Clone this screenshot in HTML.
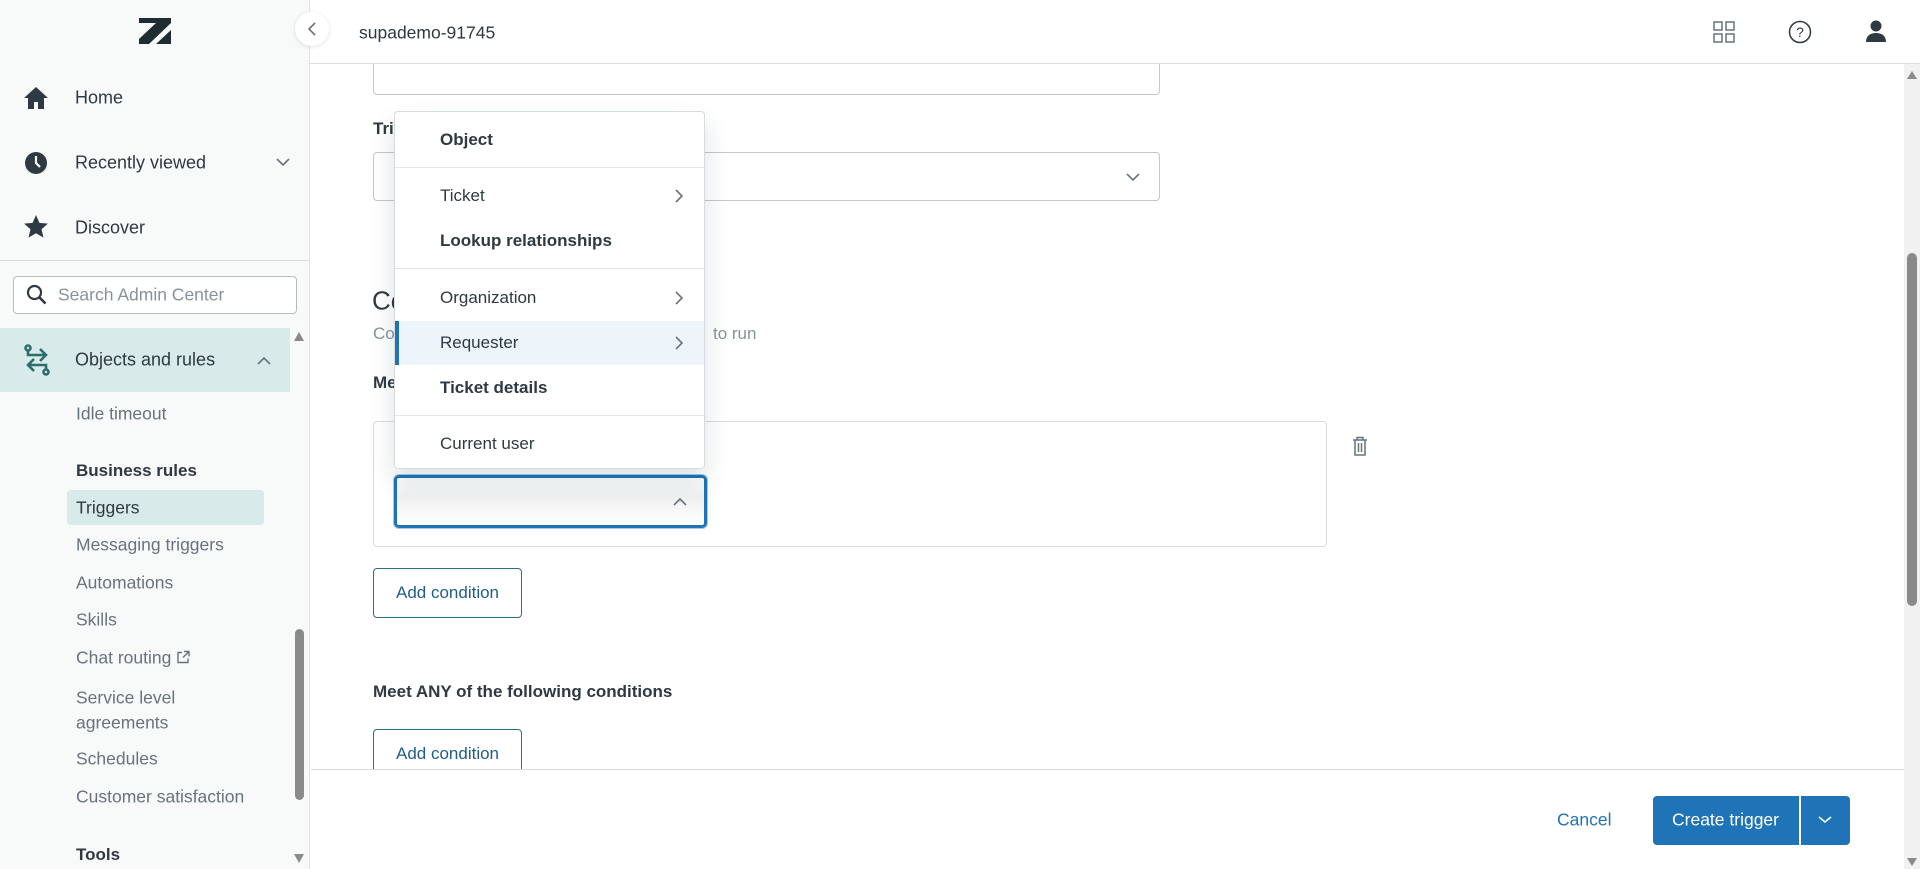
<!DOCTYPE html>
<html><head><meta charset="utf-8"><style>
*{margin:0;padding:0;box-sizing:border-box}
body{width:1920px;height:869px;overflow:hidden;background:#fff;font-family:"Liberation Sans",sans-serif;color:#2f3941;position:relative}
.a{position:absolute;white-space:nowrap}
.t{transform:translateY(-50%)}
#side{position:absolute;left:0;top:0;width:310px;height:869px;background:#f8f9f9;border-right:1px solid #e0e3e5}
.nav{font-size:18px;color:#2f3941}
.sub{font-size:17.5px;color:#68737d}
.mi{font-size:17px;color:#2f3941}
.b{font-weight:bold}
.chev{stroke:#68737d;fill:none;stroke-width:1.6}
</style></head><body>
<div id="side">
  <svg class="a" style="left:139px;top:18px" width="32" height="26" viewBox="0 0 32 26"><path d="M0 0H32V5L10 26H0V21L17 5H0Z" fill="#1f2d33"/><path d="M17 26L32 12V26Z" fill="#1f2d33"/></svg>
  <svg class="a" style="left:23px;top:86px" width="26" height="24" viewBox="0 0 26 24"><path d="M13 1L1 12h4v11h6v-7h4v7h6V12h4z" fill="#2f3941"/></svg>
  <div class="a t nav" style="left:75px;top:98px">Home</div>
  <svg class="a" style="left:24px;top:151px" width="24" height="24" viewBox="0 0 24 24"><circle cx="12" cy="12" r="11" fill="#2f3941"/><path d="M12 5v7l4 4" stroke="#f8f9f9" stroke-width="2.2" fill="none"/></svg>
  <div class="a t nav" style="left:75px;top:163px">Recently viewed</div>
  <svg class="a" style="left:276px;top:158px" width="14" height="9"><path d="M1 1l6 6 6-6" class="chev"/></svg>
  <svg class="a" style="left:23px;top:214px" width="26" height="26" viewBox="0 0 24 24"><path d="M12 1l3.2 7.2 7.8.7-5.9 5.2 1.8 7.7L12 17.8 5.1 21.8l1.8-7.7L1 8.9l7.8-.7z" fill="#2f3941"/></svg>
  <div class="a t nav" style="left:75px;top:228px">Discover</div>
  <div class="a" style="left:0;top:260px;width:310px;height:1px;background:#d8dcde"></div>
  <div class="a" style="left:13px;top:276px;width:284px;height:38px;border:1px solid #b5bcc1;border-radius:4px;background:#fff"></div>
  <svg class="a" style="left:26px;top:284px" width="22" height="22" viewBox="0 0 22 22"><circle cx="8.5" cy="8.5" r="6.5" stroke="#2f3941" stroke-width="2.2" fill="none"/><path d="M13.5 13.5l6 6" stroke="#2f3941" stroke-width="2.6"/></svg>
  <div class="a t" style="left:58px;top:295px;font-size:17.5px;color:#87929d">Search Admin Center</div>
  <div class="a" style="left:0;top:328px;width:290px;height:64px;background:#d8eaea"></div>
  <svg class="a" style="left:22px;top:344px" width="30" height="32" viewBox="0 0 30 32"><g stroke="#2b6e6c" stroke-width="2.6" fill="none"><circle cx="6" cy="4" r="2.5"/><path d="M6 7v4h18M18 5l6 6-6 6"/><circle cx="24" cy="28" r="2.5"/><path d="M24 25v-4H6M12 15l-6 6 6 6"/></g></svg>
  <div class="a t nav" style="left:75px;top:360px">Objects and rules</div>
  <svg class="a" style="left:257px;top:356px" width="14" height="9"><path d="M1 8l6-6 6 6" class="chev"/></svg>
  <svg class="a" style="left:294px;top:332px" width="10" height="9"><path d="M0 9L5 0l5 9z" fill="#8a8a8a"/></svg>
  <div class="a t sub" style="left:76px;top:414px">Idle timeout</div>
  <div class="a t nav b" style="left:76px;top:471px;font-size:17px">Business rules</div>
  <div class="a" style="left:67px;top:490px;width:197px;height:35px;background:#d8eaea;border-radius:4px"></div>
  <div class="a t sub" style="left:76px;top:508px;color:#2f3941">Triggers</div>
  <div class="a t sub" style="left:76px;top:545px">Messaging triggers</div>
  <div class="a t sub" style="left:76px;top:583px">Automations</div>
  <div class="a t sub" style="left:76px;top:620px">Skills</div>
  <div class="a t sub" style="left:76px;top:658px">Chat routing <svg width="14" height="14" viewBox="0 0 14 14" style="vertical-align:-1px"><path d="M6 2H2v10h10V8M8 1h5v5M13 1L7 7" stroke="#68737d" stroke-width="1.4" fill="none"/></svg></div>
  <div class="a t sub" style="left:76px;top:698px">Service level</div>
  <div class="a t sub" style="left:76px;top:723px">agreements</div>
  <div class="a t sub" style="left:76px;top:759px">Schedules</div>
  <div class="a t sub" style="left:76px;top:797px">Customer satisfaction</div>
  <div class="a t nav b" style="left:76px;top:855px;font-size:17px">Tools</div>
  <div class="a" style="left:295px;top:629px;width:9px;height:171px;background:#8a8a8a;border-radius:5px"></div>
  <svg class="a" style="left:294px;top:854px" width="10" height="9"><path d="M0 0h10L5 9z" fill="#8a8a8a"/></svg>
</div>
<!-- main -->
<div class="a" style="left:373px;top:40px;width:787px;height:55px;border:1px solid #c2c8cc;border-radius:0 0 4px 4px"></div>
<!-- header -->
<div class="a" style="left:310px;top:0;width:1610px;height:64px;background:#fff;border-bottom:1px solid #d8dcde"></div>
<div class="a" style="left:295px;top:12px;width:34px;height:34px;border-radius:50%;background:#fff;box-shadow:0 1px 4px rgba(0,0,0,.12)"></div>
<svg class="a" style="left:308px;top:22px" width="8" height="14"><path d="M7 1L1 7l6 6" class="chev" stroke="#2f3941"/></svg>
<div class="a t" style="left:359px;top:33px;font-size:17.5px;color:#2f3941;font-weight:500">supademo-91745</div>
<svg class="a" style="left:1713px;top:21px" width="22" height="22" viewBox="0 0 22 22"><g stroke="#68737d" stroke-width="1.5" fill="none"><rect x="1" y="1" width="8" height="8"/><rect x="13" y="1" width="8" height="8"/><rect x="1" y="13" width="8" height="8"/><rect x="13" y="13" width="8" height="8"/></g></svg>
<svg class="a" style="left:1788px;top:20px" width="24" height="24" viewBox="0 0 24 24"><circle cx="12" cy="12" r="10.5" stroke="#2f3941" stroke-width="1.5" fill="none"/><text x="12" y="17" font-size="14" text-anchor="middle" fill="#2f3941" font-family="Liberation Sans">?</text></svg>
<svg class="a" style="left:1865px;top:19px" width="22" height="24" viewBox="0 0 22 24"><circle cx="11" cy="7" r="5.5" fill="#2f3941"/><path d="M1 23c0-6 4-9 10-9s10 3 10 9z" fill="#2f3941"/></svg>
<div class="a t" style="left:373px;top:129px;font-size:17px;font-weight:bold">Tri</div>
<div class="a" style="left:373px;top:152px;width:787px;height:49px;border:1px solid #c2c8cc;border-radius:4px"></div>
<svg class="a" style="left:1126px;top:173px" width="14" height="9"><path d="M1 1l6 6 6-6" class="chev"/></svg>
<div class="a t" style="left:372px;top:301px;font-size:26px">Co</div>
<div class="a t" style="left:373px;top:334px;font-size:17px;color:#87929d">Co</div>
<div class="a t" style="left:713px;top:334px;font-size:17px;color:#87929d">to run</div>
<div class="a t b" style="left:373px;top:383px;font-size:17px">Me</div>
<div class="a" style="left:373px;top:421px;width:954px;height:126px;border:1px solid #d8dcde;border-radius:4px"></div>
<svg class="a" style="left:1352px;top:436px" width="16" height="20" viewBox="0 0 16 20"><g stroke="#68737d" stroke-width="1.5" fill="none"><path d="M1 4h14M5 4V1.5h6V4M3 4v15h10V4M6.5 7v9M9.5 7v9"/></g></svg>
<div class="a" style="left:394px;top:475px;width:313px;height:53px;border:3px solid #1f73b7;border-radius:5px;box-shadow:0 0 0 1px #a9c6e0;background:linear-gradient(#fff,#f0f0f0 40%,#fff)"></div>
<svg class="a" style="left:673px;top:497px" width="14" height="9"><path d="M1 8l6-6 6 6" class="chev" stroke="#2f3941"/></svg>
<div class="a" style="left:373px;top:568px;width:149px;height:50px;border:1px solid #2b6e8c;border-radius:4px;font-size:17px;color:#1f5f84;text-align:center;line-height:48px">Add condition</div>
<div class="a t b" style="left:373px;top:692px;font-size:17px">Meet ANY of the following conditions</div>
<div class="a" style="left:373px;top:729px;width:149px;height:50px;border:1px solid #2b6e8c;border-radius:4px;font-size:17px;color:#1f5f84;text-align:center;line-height:48px">Add condition</div>
<!-- footer -->
<div class="a" style="left:311px;top:769px;width:1593px;height:100px;background:#fff;border-top:1px solid #d8dcde"></div>
<div class="a t" style="left:1557px;top:820px;font-size:17.5px;color:#1f73b7">Cancel</div>
<div class="a" style="left:1653px;top:796px;width:197px;height:49px;background:#1f73b7;border-radius:4px"></div>
<div class="a" style="left:1799px;top:796px;width:2px;height:49px;background:#fff"></div>
<div class="a t" style="left:1672px;top:820px;font-size:17.5px;color:#fff">Create trigger</div>
<svg class="a" style="left:1818px;top:816px" width="14" height="8"><path d="M1 1l6 5 6-5" stroke="#fff" stroke-width="1.6" fill="none"/></svg>
<!-- right scrollbar -->
<div class="a" style="left:1904px;top:64px;width:16px;height:805px;background:#f1f1f1"></div>
<svg class="a" style="left:1907px;top:71px" width="10" height="8"><path d="M0 8L5 0l5 8z" fill="#8a8a8a"/></svg>
<div class="a" style="left:1907px;top:253px;width:10px;height:353px;background:#8a8a8a;border-radius:5px"></div>
<svg class="a" style="left:1907px;top:858px" width="10" height="8"><path d="M0 0h10L5 8z" fill="#8a8a8a"/></svg>
<!-- dropdown menu -->
<div class="a" style="left:394px;top:111px;width:311px;height:358px;background:#fff;border:1px solid #d8dcde;border-radius:4px;box-shadow:0 12px 24px rgba(4,68,77,.15)"></div>
<div class="a t mi b" style="left:440px;top:140px">Object</div>
<div class="a" style="left:395px;top:167px;width:309px;height:1px;background:#e4e7e9"></div>
<div class="a t mi" style="left:440px;top:196px">Ticket</div>
<svg class="a" style="left:675px;top:189px" width="8" height="14"><path d="M1 1l6 6-6 6" class="chev"/></svg>
<div class="a t mi b" style="left:440px;top:241px">Lookup relationships</div>
<div class="a" style="left:395px;top:268px;width:309px;height:1px;background:#e4e7e9"></div>
<div class="a t mi" style="left:440px;top:298px">Organization</div>
<svg class="a" style="left:675px;top:291px" width="8" height="14"><path d="M1 1l6 6-6 6" class="chev"/></svg>
<div class="a" style="left:395px;top:321px;width:309px;height:44px;background:#edf4fa"></div>
<div class="a" style="left:395px;top:321px;width:4px;height:44px;background:#1f73b7"></div>
<div class="a t mi" style="left:440px;top:343px">Requester</div>
<svg class="a" style="left:675px;top:336px" width="8" height="14"><path d="M1 1l6 6-6 6" class="chev"/></svg>
<div class="a t mi b" style="left:440px;top:388px">Ticket details</div>
<div class="a" style="left:395px;top:415px;width:309px;height:1px;background:#e4e7e9"></div>
<div class="a t mi" style="left:440px;top:444px">Current user</div>
</body></html>
